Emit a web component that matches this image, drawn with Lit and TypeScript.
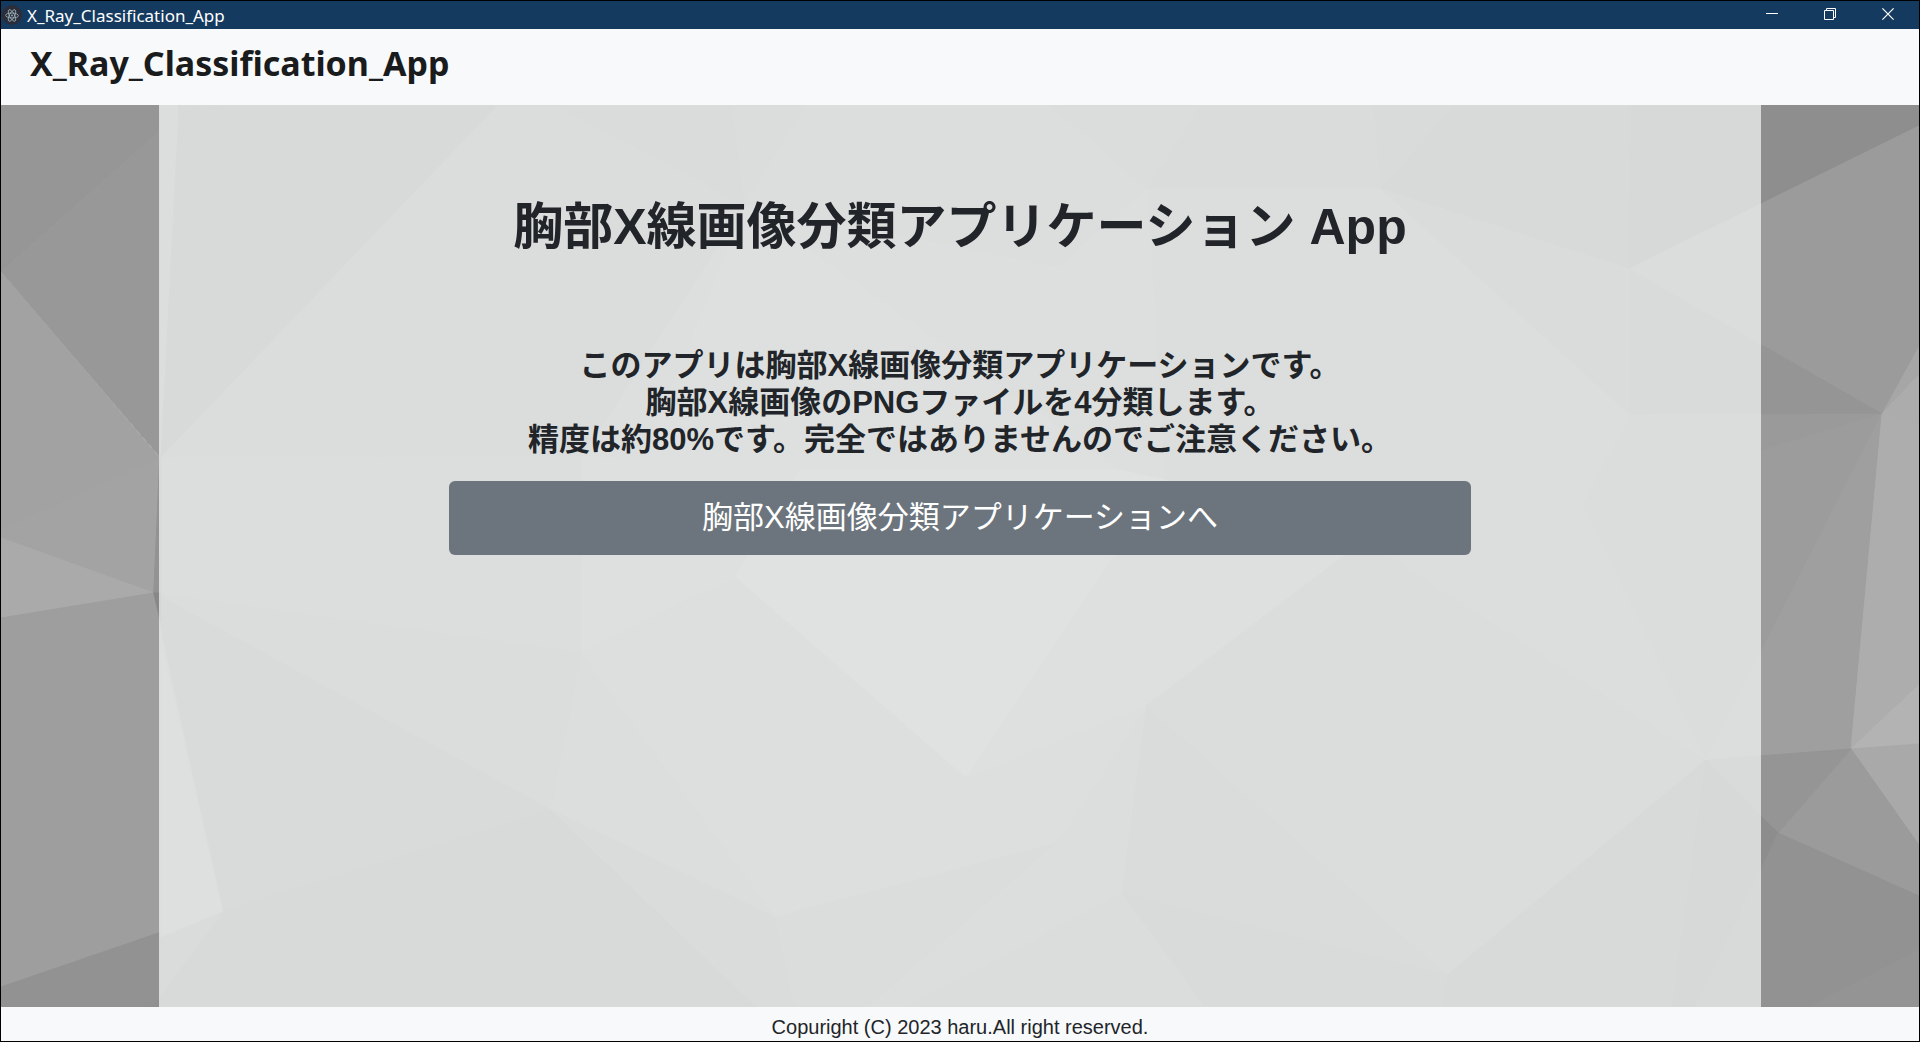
import { LitElement, html, css, svg } from "lit";
import { customElement } from "lit/decorators.js";

type Facet = [number, string];

/* Grey level and corner points of every facet of the low-poly backdrop. */
const FACETS: Facet[] = [
  [150, "0,105 160,105 160,130 0,272"],
  [152, "0,272 160,130 160,458"],
  [162, "0,272 159,458 0,530"],
  [163, "0,530 159,458 153,593 0,538"],
  [170, "0,538 153,593 0,618"],
  [158, "0,618 153,593 222,911 0,987"],
  [146, "0,987 222,911 151,1007 0,1007"],
  [159, "160,105 180,105 178,113 160,458"],
  [143, "178,105 270,105 178,113"],
  [146, "178,113 270,105 498,105 160,458"],
  [154, "498,105 555,105 745,205 582,457 160,458"],
  [151, "555,105 732,105 745,205"],
  [155, "732,105 807,105 745,205"],
  [159, "807,105 1050,105 1147,189 1058,268 745,205"],
  [154, "1050,105 1202,105 1147,189"],
  [150, "1202,105 1375,105 1381,189 1147,189"],
  [149, "1375,105 1455,105 1381,189"],
  [144, "1455,105 1631,105 1630,269 1381,189"],
  [142, "1631,105 1920,105 1920,126 1630,269"],
  [155, "1630,269 1920,126 1920,347 1883,414"],
  [166, "1883,414 1920,347 1920,375"],
  [172, "1883,414 1920,375 1920,425"],
  [149, "1630,269 1883,414 1630,415"],
  [151, "1381,189 1630,269 1630,415"],
  [154, "1630,415 1883,414 1583,505"],
  [157, "1381,189 1630,415 1583,505 1365,540"],
  [159, "1147,189 1381,189 1365,540 1165,480"],
  [161, "1147,189 1165,480 1118,470 1058,268"],
  [162, "745,205 1058,268 1118,470"],
  [165, "745,205 1118,470 735,577 640,460"],
  [160, "745,205 640,460 582,457"],
  [159, "159,458 582,457 581,653 153,593"],
  [164, "582,457 640,460 735,577 581,653"],
  [172, "735,577 800,470 1118,470 1165,480 966,778"],
  [166, "1165,480 1365,540 1147,705 966,778"],
  [154, "153,593 581,653 551,810"],
  [148, "153,593 551,810 222,911"],
  [144, "222,911 551,810 493,1007 151,1007"],
  [152, "222,911 160,937 160,995"],
  [145, "551,810 757,1007 493,1007"],
  [157, "581,653 775,917 551,810"],
  [160, "581,653 735,577 775,917"],
  [152, "551,810 775,917 795,1007 757,1007"],
  [162, "735,577 966,778 1147,705 1057,843 775,917"],
  [155, "775,917 1057,843 870,1007 795,1007"],
  [159, "1057,843 1147,705 1122,893 905,1007 870,1007"],
  [156, "1122,893 1205,1007 905,1007"],
  [151, "1147,705 1448,975 1122,893"],
  [149, "1122,893 1448,975 1443,1007 1205,1007"],
  [146, "1448,975 1510,1007 1443,1007"],
  [155, "1147,705 1365,540 1448,975"],
  [153, "1365,540 1707,760 1448,975"],
  [158, "1365,540 1583,505 1707,760"],
  [156, "1583,505 1883,414 1707,760"],
  [159, "1883,414 1852,749 1707,760"],
  [173, "1883,414 1920,425 1920,685 1852,749"],
  [179, "1852,749 1920,685 1920,744"],
  [169, "1852,749 1920,744 1920,845"],
  [155, "1852,749 1920,845 1920,896 1779,833"],
  [149, "1707,760 1852,749 1779,833"],
  [144, "1448,975 1707,760 1673,1007 1510,1007"],
  [141, "1707,760 1779,833 1697,1007 1673,1007"],
  [146, "1779,833 1920,896 1920,950 1810,1007 1697,1007"],
  [148, "1920,950 1920,1007 1810,1007"],
  [163, "160,640 222,911 160,937"],
  [147, "159,458 160,458 160,593 153,593"],
  [136, "153,593 160,593 160,622"],
];

@customElement("poly-backdrop")
export class PolyBackdrop extends LitElement {
  static styles = css`
    :host { display: grid; overflow: hidden; }
    .art { width: 100%; height: 100%; min-height: 0; display: block; contain: size; }
  `;

  render() {
    return html`<svg class="art" viewBox="0 105 1920 902" preserveAspectRatio="none" aria-hidden="true">
      ${FACETS.map(([level, points]) => {
        const tone = `rgb(${level},${level},${level})`;
        return svg`<polygon points=${points} fill=${tone} stroke=${tone} stroke-width="1" />`;
      })}
    </svg>`;
  }
}

@customElement("window-bar")
export class WindowBar extends LitElement {
  static styles = css`
    :host {
      display: flex;
      align-items: stretch;
      justify-content: space-between;
      height: 28px;
      background: #153a5f;
      color: #fff;
    }
    .caption {
      display: flex;
      align-items: center;
      gap: 5px;
      padding-left: 1px;
      font: 17px/28px "Noto Sans", sans-serif;
    }
    .name { padding-top: 1px; }
    .logo { width: 20px; height: 20px; display: block; }
    .controls { display: flex; padding-right: 2px; }
    .control {
      display: flex;
      align-items: center;
      justify-content: center;
      width: 58px;
      padding: 0 0 2px;
      border: 0;
      background: none;
      color: inherit;
    }
    .glyph { width: 12px; height: 12px; display: block; }
  `;

  render() {
    return html`
      <div class="caption">
        <svg class="logo" viewBox="0 0 20 20" aria-hidden="true">
          <circle cx="10" cy="10" r="10" fill="#2b2e3a" />
          <g fill="none" stroke="#9fb6bd" stroke-width="0.8">
            <ellipse cx="10" cy="10.5" rx="6.4" ry="2.5" transform="rotate(2 10 10.5)" />
            <ellipse cx="10" cy="10.5" rx="6.4" ry="2.5" transform="rotate(62 10 10.5)" />
            <ellipse cx="10" cy="10.5" rx="6.4" ry="2.5" transform="rotate(118 10 10.5)" />
          </g>
          <circle cx="10" cy="10.5" r="0.9" fill="#9fb6bd" />
        </svg>
        <span class="name">X_Ray_Classification_App</span>
      </div>
      <div class="controls">
        <button class="control" aria-label="Minimize">
          <svg class="glyph" viewBox="0 0 12 12"><path d="M0 5.5H12" stroke="#fff" /></svg>
        </button>
        <button class="control" aria-label="Restore">
          <svg class="glyph" viewBox="0 0 12 12" fill="none" stroke="#fff">
            <path d="M.5 2.5H9.500V11.500H.5ZM2.500 2.500V.5H11.500V9.500H9.500" />
          </svg>
        </button>
        <button class="control" aria-label="Close">
          <svg class="glyph" viewBox="0 0 12 12"><path d="M.4.4 11.600 11.600M11.600.4.4 11.600" stroke="#fff" stroke-width="1.2" /></svg>
        </button>
      </div>
    `;
  }
}

@customElement("app-root")
export class AppRoot extends LitElement {
  static styles = css`
    :host {
      display: flex;
      flex-direction: column;
      box-sizing: border-box;
      min-height: 100vh;
      border: 1px solid #000;
      background: #f8f9fa;
      color: #212529;
      font-family: "Liberation Sans", "Noto Sans CJK JP", sans-serif;
    }
    .navbar { padding: 12px 29px 20px; }
    .brand {
      display: block;
      color: #1a1b1c;
      font: 700 34px/44px "Noto Sans", sans-serif;
      text-decoration: none;
    }
    .stage { flex: 1; display: grid; }
    .backdrop, .layer { grid-area: 1 / 1; }
    .layer { display: flex; justify-content: center; z-index: 1; }
    .panel {
      box-sizing: border-box;
      width: 83.5%;
      padding: 92px 0 40px;
      background: rgba(246, 249, 248, 0.7);
      display: flex;
      flex-direction: column;
      align-items: center;
      text-align: center;
    }
    .title { margin: 0 0 90px; font-size: 50px; line-height: 60px; font-weight: 700; }
    .lead { margin: 0 0 23px; font-size: 31px; line-height: 37px; font-weight: 700; }
    .go {
      box-sizing: border-box;
      width: 63.8%;
      padding: 14px 20px 14px;
      border: 0;
      border-radius: 6px;
      background: #6c757d;
      color: #fff;
      font-family: inherit;
      font-size: 31px;
      line-height: 46px;
    }
    .footer { padding: 9px 0 2px; text-align: center; font-size: 20px; line-height: 23px; }
  `;

  render() {
    return html`
      <window-bar></window-bar>
      <nav class="navbar"><a class="brand" href="#">X_Ray_Classification_App</a></nav>
      <main class="stage">
        <poly-backdrop class="backdrop"></poly-backdrop>
        <div class="layer">
          <section class="panel">
            <h1 class="title">胸部X線画像分類アプリケーション App</h1>
            <p class="lead">
              このアプリは胸部X線画像分類アプリケーションです。<br />
              胸部X線画像のPNGファイルを4分類します。<br />
              精度は約80%です。完全ではありませんのでご注意ください。
            </p>
            <button class="go">胸部X線画像分類アプリケーションへ</button>
          </section>
        </div>
      </main>
      <footer class="footer">Copuright (C) 2023 haru.All right reserved.</footer>
    `;
  }
}
